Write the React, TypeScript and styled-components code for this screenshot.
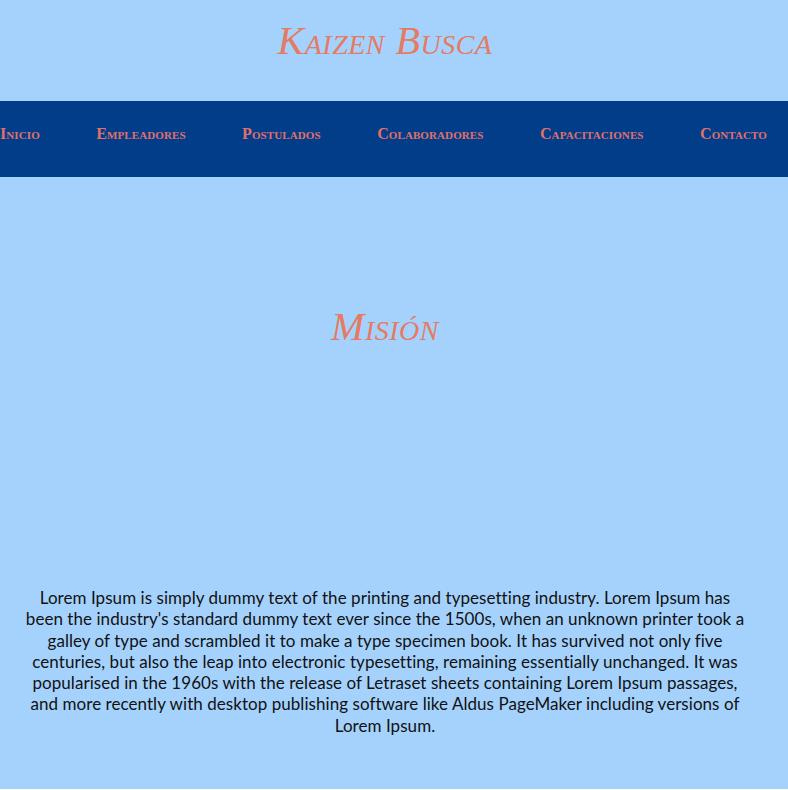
import React from "react";
import styled, { createGlobalStyle } from "styled-components";

const Global = createGlobalStyle`
  html, body { margin: 0; padding: 0; background: #ffffff; }
  #root { background: #a4d2fd; }
`;

const Page = styled.div`
  background: #a4d2fd;
  min-height: 789px;
  display: flex;
  flex-direction: column;
`;

const Header = styled.header`
  height: 101px;
  display: flex;
  align-items: flex-start;
  justify-content: center;
  padding-right: 18px;
  box-sizing: border-box;
`;

const Title = styled.h1`
  margin: 18px 0 0;
  font-family: "Liberation Serif", serif;
  font-style: italic;
  font-variant: small-caps;
  font-weight: normal;
  font-size: 40px;
  line-height: 46px;
  color: #e57b63;
  letter-spacing: 0.5px;
`;

const Nav = styled.nav`
  background: #023d89;
  height: 76px;
  display: flex;
  align-items: center;
  padding-bottom: 10px;
  box-sizing: border-box;
`;

const NavList = styled.ul`
  list-style: none;
  margin: 0;
  padding: 0 21px 0 0;
  width: 100%;
  display: flex;
  justify-content: space-between;
`;

const NavLink = styled.a`
  font-family: "Liberation Serif", serif;
  font-variant: small-caps;
  font-weight: bold;
  font-size: 16px;
  letter-spacing: 0.1px;
  color: #e0706a;
  text-decoration: none;
`;

const Section = styled.section`
  display: flex;
  flex-direction: column;
  align-items: center;
  padding: 0 38px 0 20px;
`;

const SectionTitle = styled.h2`
  margin: 127px 0 0;
  font-family: "Liberation Serif", serif;
  font-style: italic;
  font-variant: small-caps;
  font-weight: normal;
  font-size: 40px;
  line-height: 46px;
  letter-spacing: 0.5px;
  color: #e57b63;
`;

const Paragraph = styled.p`
  margin: 237px 0 0;
  font-family: "Lato", sans-serif;
  font-size: 17px;
  letter-spacing: 0.05px;
  line-height: 21.3px;
  text-align: center;
  white-space: nowrap;
  color: #111111;
`;

const items = ["Inicio", "Empleadores", "Postulados", "Colaboradores", "Capacitaciones", "Contacto"];

const lines = [
  "Lorem Ipsum is simply dummy text of the printing and typesetting industry. Lorem Ipsum has",
  "been the industry's standard dummy text ever since the 1500s, when an unknown printer took a",
  "galley of type and scrambled it to make a type specimen book. It has survived not only five",
  "centuries, but also the leap into electronic typesetting, remaining essentially unchanged. It was",
  "popularised in the 1960s with the release of Letraset sheets containing Lorem Ipsum passages,",
  "and more recently with desktop publishing software like Aldus PageMaker including versions of",
  "Lorem Ipsum.",
];

export default function App() {
  return (
    <Page>
      <Global />
      <Header>
        <Title>Kaizen Busca</Title>
      </Header>
      <Nav>
        <NavList>
          {items.map((t) => (
            <li key={t}>
              <NavLink href="#">{t}</NavLink>
            </li>
          ))}
        </NavList>
      </Nav>
      <Section>
        <SectionTitle>Misión</SectionTitle>
        <Paragraph>
          {lines.map((l, i) => (
            <React.Fragment key={i}>
              {l}
              {i < lines.length - 1 && <br />}
            </React.Fragment>
          ))}
        </Paragraph>
      </Section>
    </Page>
  );
}
